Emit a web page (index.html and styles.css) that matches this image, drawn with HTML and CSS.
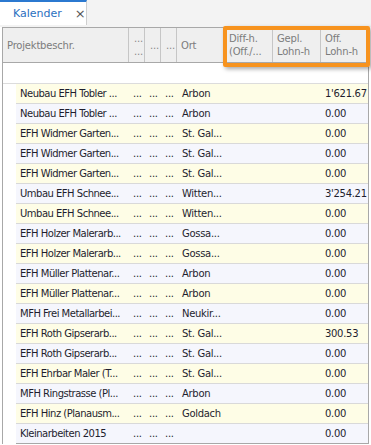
FILE: index.html
```
<!DOCTYPE html>
<html lang="de">
<head>
    <meta charset="UTF-8">
    <meta name="viewport" content="width=device-width, initial-scale=1.0">
    <title>Kalender</title>
    <link rel="stylesheet" href="styles.css">
</head>
<body>
<div class="tabs">
    <div class="tab"><span class="tab-title">Kalender</span><span class="tab-close">&times;</span></div>
</div>
<div class="panel">
  <div class="grid">
    <div class="head">
        <div class="hcell">Projektbeschr.</div>
        <div class="hcell dots">...<br>...</div>
        <div class="hcell dots">...</div>
        <div class="hcell dots">...</div>
        <div class="hcell">Ort</div>
        <div class="hcell">Diff-h.<br>(Off./...</div>
        <div class="hcell">Gepl.<br>Lohn-h</div>
        <div class="hcell last">Off.<br>Lohn-h</div>
    </div>
    <div class="filter-row"></div>
    <div class="rows">
        <div class="row"><span>Neubau EFH Tobler ...</span><span>...</span><span>...</span><span>...</span><span class="ort">Arbon</span><span></span><span></span><span>1'621.67</span></div>
        <div class="row"><span>Neubau EFH Tobler ...</span><span>...</span><span>...</span><span>...</span><span class="ort">Arbon</span><span></span><span></span><span>0.00</span></div>
        <div class="row"><span>EFH Widmer Garten...</span><span>...</span><span>...</span><span>...</span><span class="ort">St. Gal...</span><span></span><span></span><span>0.00</span></div>
        <div class="row"><span>EFH Widmer Garten...</span><span>...</span><span>...</span><span>...</span><span class="ort">St. Gal...</span><span></span><span></span><span>0.00</span></div>
        <div class="row"><span>EFH Widmer Garten...</span><span>...</span><span>...</span><span>...</span><span class="ort">St. Gal...</span><span></span><span></span><span>0.00</span></div>
        <div class="row"><span>Umbau EFH Schnee...</span><span>...</span><span>...</span><span>...</span><span class="ort">Witten...</span><span></span><span></span><span>3'254.21</span></div>
        <div class="row"><span>Umbau EFH Schnee...</span><span>...</span><span>...</span><span>...</span><span class="ort">Witten...</span><span></span><span></span><span>0.00</span></div>
        <div class="row"><span>EFH Holzer Malerarb...</span><span>...</span><span>...</span><span>...</span><span class="ort">Gossa...</span><span></span><span></span><span>0.00</span></div>
        <div class="row"><span>EFH Holzer Malerarb...</span><span>...</span><span>...</span><span>...</span><span class="ort">Gossa...</span><span></span><span></span><span>0.00</span></div>
        <div class="row"><span>EFH Müller Plattenar...</span><span>...</span><span>...</span><span>...</span><span class="ort">Arbon</span><span></span><span></span><span>0.00</span></div>
        <div class="row"><span>EFH Müller Plattenar...</span><span>...</span><span>...</span><span>...</span><span class="ort">Arbon</span><span></span><span></span><span>0.00</span></div>
        <div class="row"><span>MFH Frei Metallarbei...</span><span>...</span><span>...</span><span>...</span><span class="ort">Neukir...</span><span></span><span></span><span>0.00</span></div>
        <div class="row"><span>EFH Roth Gipserarb...</span><span>...</span><span>...</span><span>...</span><span class="ort">St. Gal...</span><span></span><span></span><span>300.53</span></div>
        <div class="row"><span>EFH Roth Gipserarb...</span><span>...</span><span>...</span><span>...</span><span class="ort">St. Gal...</span><span></span><span></span><span>0.00</span></div>
        <div class="row"><span>EFH Ehrbar Maler (T...</span><span>...</span><span>...</span><span>...</span><span class="ort">St. Gal...</span><span></span><span></span><span>0.00</span></div>
        <div class="row"><span>MFH Ringstrasse (Pl...</span><span>...</span><span>...</span><span>...</span><span class="ort">Arbon</span><span></span><span></span><span>0.00</span></div>
        <div class="row"><span>EFH Hinz (Planausm...</span><span>...</span><span>...</span><span>...</span><span class="ort">Goldach</span><span></span><span></span><span>0.00</span></div>
        <div class="row"><span>Kleinarbeiten 2015</span><span>...</span><span>...</span><span>...</span><span class="ort"></span><span></span><span></span><span>0.00</span></div>
    </div>
    <!-- highlight around the hour columns -->
    <div class="highlight"></div>
  </div>
</div>
</body>
</html>
```
FILE: styles.css
```
body {
    margin: 0;
    background: #fff;
    font-family: "DejaVu Sans", Verdana, sans-serif;
    font-size: 10px;
    color: #1e1e2e;
}

.tabs {
    height: 27px;
    background: #f3f3f3;
    display: flex;
}
.tab {
    width: 87px;
    height: 25px;
    background: #fff;
    border-top: 2px solid #2b79d0;
    border-right: 1px solid #cfcfcf;
    display: flex;
    align-items: center;
    padding-left: 13px;
    box-sizing: border-box;
}
.tab-title { color: #2a6fc0; font-size: 11px; }
.tab-close { color: #555; font-size: 13px; margin-left: 13px; }

.panel { padding: 0 2px 0 2px; }

.grid {
    position: relative;
    border: 1px solid #a8a8a8;
    border-bottom: none;
}

.head {
    display: grid;
    grid-template-columns: 126px 16px 16px 16px 48px 48px 48px 1fr;
    height: 34px;
    background: #efefef;
    border-bottom: 1px solid #a8a8a8;
}
.hcell {
    border-right: 1px solid #c6c6c6;
    color: #7c7c7c;
    padding-left: 4px;
    display: flex;
    align-items: center;
    line-height: 13px;
    white-space: nowrap;
    overflow: hidden;
    letter-spacing: -0.2px;
}
.hcell.dots { padding-left: 5px; color: #8a8a8a; }
.hcell.last { border-right: none; }

.filter-row {
    height: 20px;
    border-bottom: 1px solid #dcdcdc;
}

.rows { padding-left: 13px; }
.row {
    display: grid;
    grid-template-columns: 113px 16px 16px 16px 48px 48px 48px 1fr;
    height: 19px;
    line-height: 19px;
    border-bottom: 1px solid #d9d9d9;
    background: #fefde6;
    letter-spacing: -0.3px;
}
.row:nth-child(even) { background: #f5f6fd; }
.row:last-child { border-bottom-color: #a8a8a8; }
.row span {
    padding-left: 4px;
    white-space: nowrap;
}
.row span:first-child { letter-spacing: -0.5px; }
.row .ort { padding-left: 5px; }

.highlight {
    position: absolute;
    left: 220px;
    top: -2px;
    width: 139px;
    height: 33px;
    border: 4px solid #f7931e;
    border-radius: 2px;
    box-shadow: 2px 2px 4px rgba(0, 0, 0, 0.35);
}
```
